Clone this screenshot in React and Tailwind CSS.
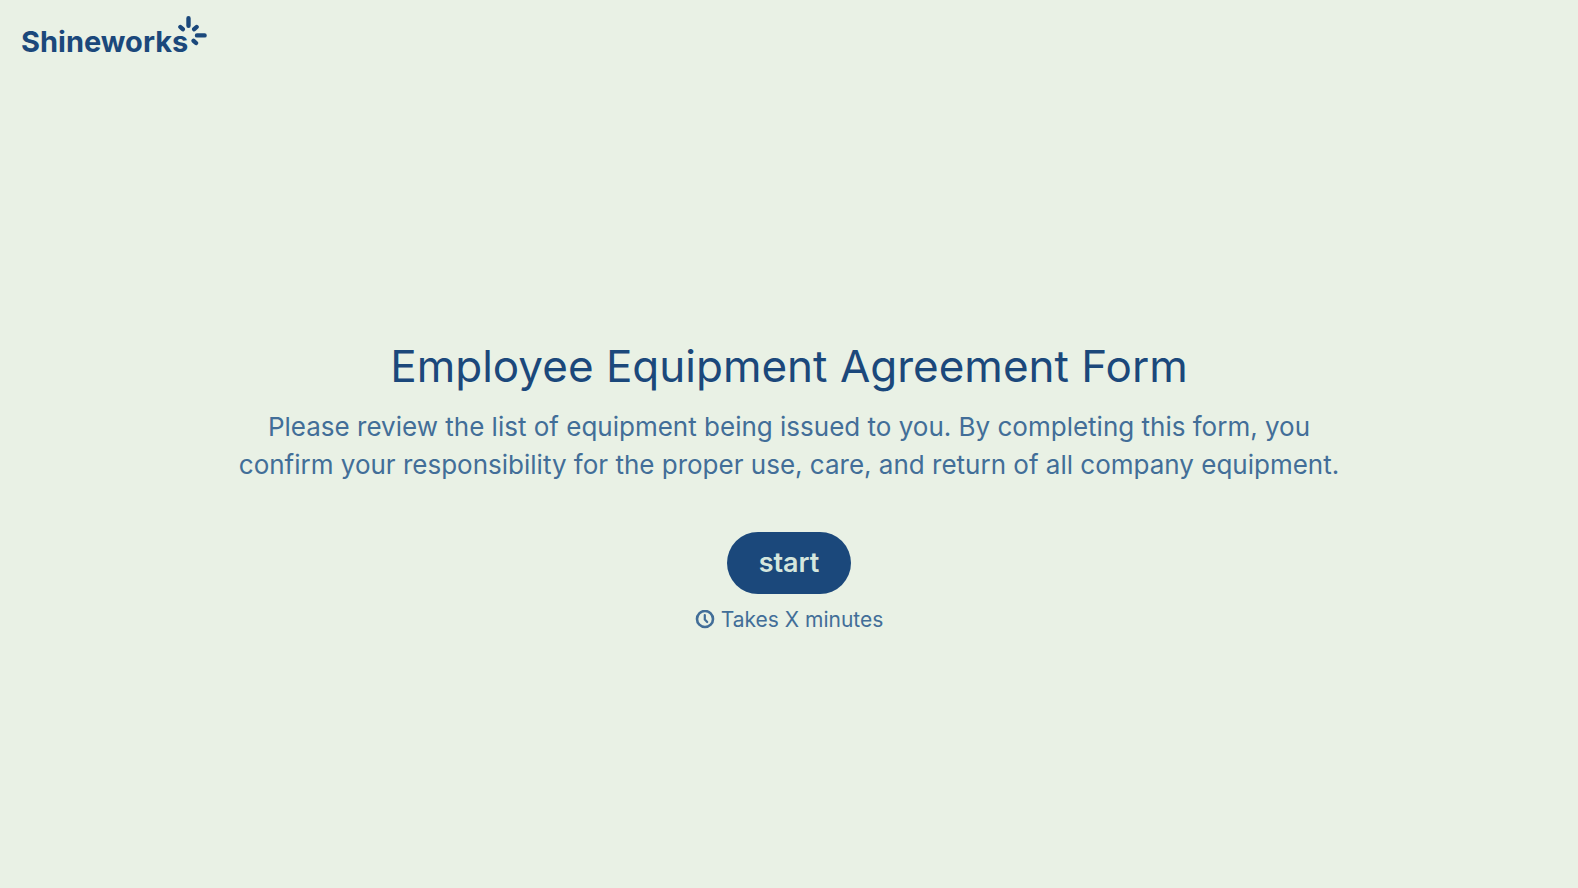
function Sparkle() {
  return (
    <svg
      viewBox="0 0 32 32"
      aria-hidden="true"
      className="absolute -top-2 -right-5 size-8"
      fill="none"
      stroke="currentColor"
      strokeWidth="4.4"
      strokeLinecap="round"
    >
      <path d="M12.5 4.2v7.6M4.4 13l2.4 2.2M18.2 15.2l2.4-2.2M21 21.4h7.6M17.6 26.8l2.4 2.2" />
    </svg>
  );
}

function ClockIcon() {
  return (
    <svg
      viewBox="0 0 20 20"
      aria-hidden="true"
      className="size-5"
      fill="none"
      stroke="currentColor"
      strokeWidth="2.6"
      strokeLinecap="round"
      strokeLinejoin="round"
    >
      <circle cx="10" cy="9" r="8" />
      <path d="M9.8 5V9.4L12.2 12" strokeWidth="2.2" />
    </svg>
  );
}

export default function App() {
  return (
    <div className="flex min-h-screen flex-col bg-[#e9f1e5] font-['Inter',sans-serif] text-[#1b487b]">
      <header className="flex h-20 shrink-0 items-center px-[21px]">
        <a href="#" className="relative flex items-center pt-1">
          <span className="text-[29px] leading-8 font-bold">Shineworks</span>
          <Sparkle />
        </a>
      </header>
      <main className="flex flex-1 flex-col items-center px-6 pt-[252px] text-center">
        <h1 className="text-[44px] leading-[68px]">Employee Equipment Agreement Form</h1>
        <p className="mt-2 max-w-[1130px] text-[26px] leading-[38px] text-[#426e98]">
          Please review the list of equipment being issued to you. By completing this form, you
          confirm your responsibility for the proper use, care, and return of all company equipment.
        </p>
        <button
          type="button"
          className="mt-12 rounded-full bg-[#1b487b] px-8 py-4 text-[27px] leading-[30px] font-semibold text-[#d5e6dd]"
        >
          start
        </button>
        <div className="mt-3 flex items-center gap-1.5 text-[21px] leading-7 text-[#426e98]">
          <ClockIcon />
          <p>Takes X minutes</p>
        </div>
      </main>
    </div>
  );
}
